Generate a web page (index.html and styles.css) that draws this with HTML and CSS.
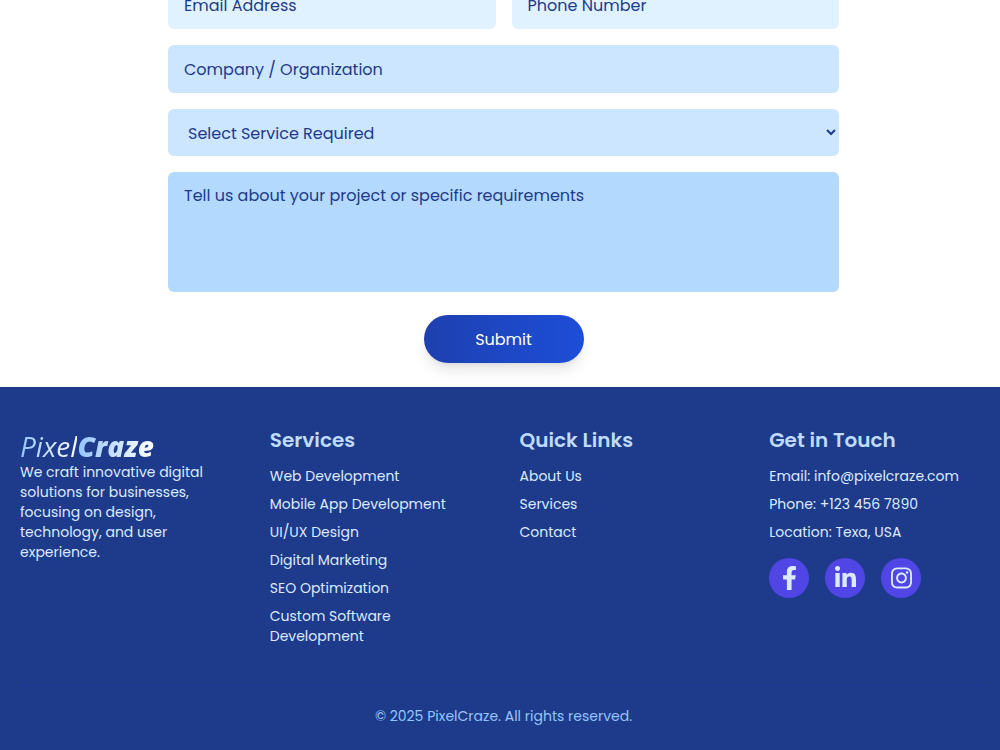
FILE: index.html
```html
<!DOCTYPE html>
<html lang="en">
<head>
    <meta charset="UTF-8">
    <meta name="viewport" content="width=device-width, initial-scale=1.0">
    <title>PixelCraze</title>
    <link rel="stylesheet" href="styles.css">
</head>
<body>
    <main class="contact">
        <form class="contact-form">
            <div class="form-row">
                <input class="field field-light" type="email" placeholder="Email Address" aria-label="Email Address">
                <input class="field field-light" type="tel" placeholder="Phone Number" aria-label="Phone Number">
            </div>
            <input class="field" type="text" placeholder="Company / Organization" aria-label="Company / Organization">
            <select class="field field-select" aria-label="Select Service Required">
                <option>Select Service Required</option>
                <option>Web Development</option>
                <option>Mobile App Development</option>
                <option>UI/UX Design</option>
                <option>Digital Marketing</option>
            </select>
            <textarea class="field field-message" placeholder="Tell us about your project or specific requirements" aria-label="Project details"></textarea>
            <button class="submit-button" type="submit">Submit</button>
        </form>
    </main>

    <footer class="footer">
        <div class="footer-grid">
            <div class="brand">
                <div class="logo"><span class="logo-light">Pixel</span><span class="logo-bold">Craze</span></div>
                <p>We craft innovative digital solutions for businesses, focusing on design, technology, and user experience.</p>
            </div>
            <div>
                <h3>Services</h3>
                <ul>
                    <li>Web Development</li>
                    <li>Mobile App Development</li>
                    <li>UI/UX Design</li>
                    <li>Digital Marketing</li>
                    <li>SEO Optimization</li>
                    <li>Custom Software Development</li>
                </ul>
            </div>
            <div>
                <h3>Quick Links</h3>
                <ul>
                    <li><a href="#about">About Us</a></li>
                    <li><a href="#services">Services</a></li>
                    <li><a href="#contact">Contact</a></li>
                </ul>
            </div>
            <div>
                <h3>Get in Touch</h3>
                <ul>
                    <li>Email: <a href="mailto:info@pixelcraze.com">info@pixelcraze.com</a></li>
                    <li>Phone: <a href="tel:+1234567890">+123 456 7890</a></li>
                    <li>Location: Texa, USA</li>
                </ul>
                <div class="social">
                    <a href="#facebook" aria-label="Facebook">
                        <svg viewBox="0 0 320 512"><path d="M279.14 288l14.22-92.66h-88.91v-60.13c0-25.35 12.42-50.06 52.24-50.06h40.42V6.26S260.43 0 225.36 0c-73.22 0-121.08 44.38-121.08 124.72v70.62H22.89V288h81.39v224h100.17V288z"/></svg>
                    </a>
                    <a href="#linkedin" aria-label="LinkedIn">
                        <svg viewBox="0 0 448 512"><path d="M100.28 448H7.4V148.9h92.88zM53.79 108.1C24.09 108.1 0 83.5 0 53.8a53.79 53.79 0 0 1 107.58 0c0 29.7-24.1 54.3-53.79 54.3zM447.9 448h-92.68V302.4c0-34.7-.7-79.2-48.29-79.2-48.29 0-55.69 37.7-55.69 76.7V448h-92.78V148.9h89.08v40.8h1.3c12.4-23.5 42.69-48.3 87.88-48.3 94 0 111.28 61.9 111.28 142.3V448z"/></svg>
                    </a>
                    <a href="#instagram" aria-label="Instagram">
                        <svg viewBox="0 0 448 512"><path d="M224.1 141c-63.6 0-114.9 51.3-114.9 114.9s51.3 114.9 114.9 114.9S339 319.5 339 255.9 287.7 141 224.1 141zm0 189.6c-41.1 0-74.7-33.5-74.7-74.7s33.5-74.7 74.7-74.7 74.7 33.5 74.7 74.7-33.6 74.7-74.7 74.7zm146.4-194.3c0 14.9-12 26.8-26.8 26.8-14.9 0-26.8-12-26.8-26.8s12-26.8 26.8-26.8 26.8 12 26.8 26.8zm76.1 27.2c-1.7-35.9-9.9-67.7-36.2-93.9-26.2-26.2-58-34.4-93.9-36.2-37-2.1-147.9-2.1-184.9 0-35.8 1.7-67.6 9.9-93.9 36.1s-34.4 58-36.2 93.9c-2.1 37-2.1 147.9 0 184.9 1.7 35.9 9.9 67.7 36.2 93.9s58 34.4 93.9 36.2c37 2.1 147.9 2.1 184.9 0 35.9-1.7 67.7-9.9 93.9-36.2 26.2-26.2 34.4-58 36.2-93.9 2.1-37 2.1-147.8 0-184.8zM398.8 388c-7.8 19.6-22.9 34.7-42.6 42.6-29.5 11.7-99.5 9-132.1 9s-102.7 2.6-132.1-9c-19.6-7.8-34.7-22.9-42.6-42.6-11.7-29.5-9-99.5-9-132.1s-2.6-102.7 9-132.1c7.8-19.6 22.9-34.7 42.6-42.6 29.5-11.7 99.5-9 132.1-9s102.7-2.6 132.1 9c19.6 7.8 34.7 22.9 42.6 42.6 11.7 29.5 9 99.5 9 132.1s2.7 102.7-9 132.1z"/></svg>
                    </a>
                </div>
            </div>
        </div>
        <div class="copyright">© 2025 PixelCraze. All rights reserved.</div>
    </footer>
</body>
</html>
```
FILE: styles.css
```css
* {
    box-sizing: border-box;
}
html {
    overflow: hidden;
}
body {
    margin: 0;
    font-family: Poppins, Inter, sans-serif;
    background-color: #fff;
}
.contact {
    padding: 0 13px 24px 20px;
    margin-top: -19px;
}
.contact-form {
    display: flex;
    flex-direction: column;
    gap: 16px;
    max-width: 671px;
    margin: 0 auto;
}
.form-row {
    display: grid;
    grid-template-columns: 1fr 1fr;
    gap: 16px;
}
.field {
    width: 100%;
    height: 48px;
    padding: 12px 16px;
    border: none;
    border-radius: 6px;
    background-color: #cce6ff;
    color: #1e3a8a;
    font-family: inherit;
    font-size: 16px;
    line-height: 24px;
}
.field::placeholder {
    color: #1e3a8a;
    opacity: 1;
}
.field-light {
    background-color: #e0f2ff;
}
.field-select {
    height: 47px;
    padding-right: 0;
}
.field-message {
    display: block;
    height: 120px;
    background-color: #b3d9ff;
    resize: none;
}
.submit-button {
    align-self: center;
    width: 160px;
    height: 48px;
    margin-top: 7px;
    border: none;
    border-radius: 24px;
    background: linear-gradient(to right, #1e40af, #1d4ed8);
    color: #fff;
    font-family: inherit;
    font-size: 16px;
    box-shadow: 0 10px 15px -3px rgba(0, 0, 0, 0.1), 0 4px 6px -4px rgba(0, 0, 0, 0.1);
    cursor: pointer;
}
.footer {
    padding: 39px 13px 24px 20px;
    background-color: #1e3a8a;
    color: #dbeafe;
    font-size: 14px;
    line-height: 20px;
}
.footer-grid {
    display: grid;
    grid-template-columns: repeat(4, 1fr);
    gap: 32px;
}
.logo {
    padding-top: 4px;
    font-family: "Open Sans", "Noto Sans", sans-serif;
    font-size: 28px;
    line-height: 32px;
    font-style: italic;
}
.logo span {
    background: linear-gradient(to right, #93c5fd, #fff);
    background-clip: text;
    -webkit-background-clip: text;
    color: transparent;
}
.logo-light {
    font-weight: 400;
}
.logo-bold {
    font-weight: 800;
}
.brand p {
    margin: 0;
}
h3 {
    margin: 0 0 12px;
    color: #bfdbfe;
    font-size: 20px;
    line-height: 28px;
    font-weight: 600;
}
ul {
    display: grid;
    gap: 8px;
    margin: 0;
    padding: 0;
    list-style: none;
}
.footer a {
    color: inherit;
    text-decoration: none;
}
.social {
    display: flex;
    gap: 16px;
    margin-top: 16px;
}
.social a {
    display: flex;
    align-items: center;
    justify-content: center;
    width: 40px;
    height: 40px;
    border-radius: 50%;
    background-color: #4f46e5;
}
.social svg {
    height: 24px;
    fill: #dbeafe;
}
.copyright {
    margin-top: 39px;
    padding-top: 20px;
    border-top: 1px solid #1e3a9f;
    color: #93c5fd;
    text-align: center;
}
```
